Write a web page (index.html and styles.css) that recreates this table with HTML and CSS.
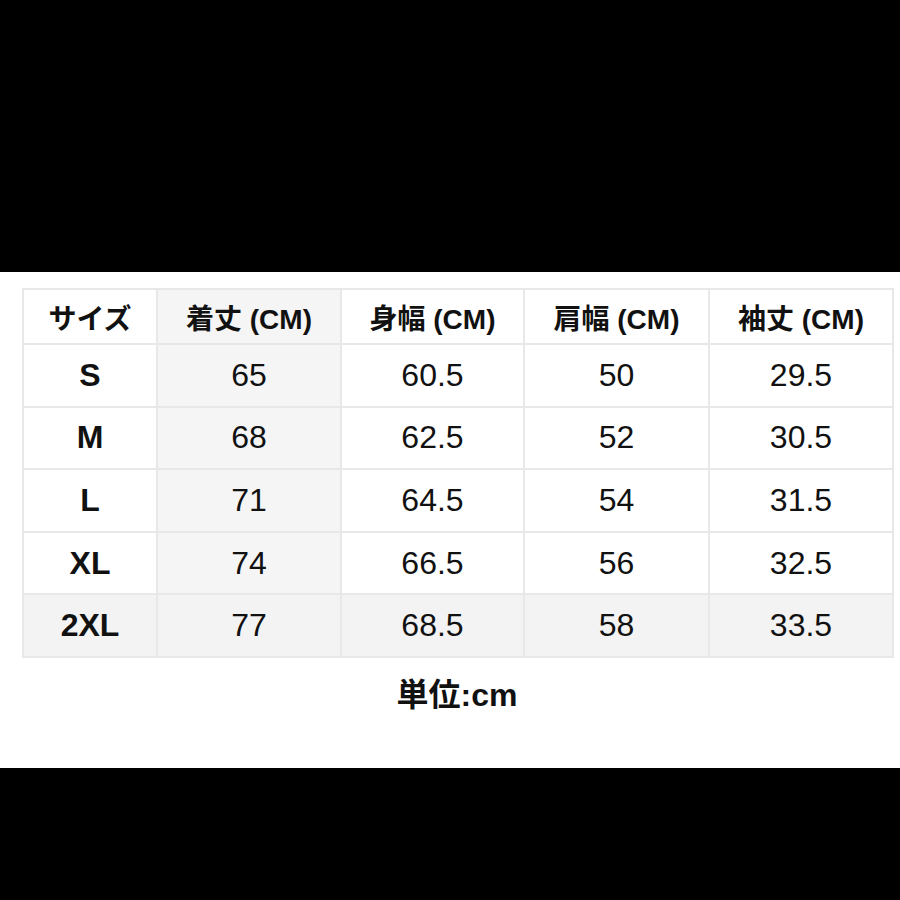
FILE: index.html
```html
<!DOCTYPE html>
<html lang="ja">
<head>
<meta charset="utf-8">
<title>サイズ表</title>
<link rel="stylesheet" href="styles.css">
</head>
<body>
<div class="band top"></div>
<main class="sheet">
  <table class="sizes">
    <colgroup>
      <col class="c1"><col class="c2"><col class="c3"><col class="c4"><col class="c5">
    </colgroup>
    <thead>
      <tr><th>サイズ</th><th class="alt">着丈 (CM)</th><th>身幅 (CM)</th><th>肩幅 (CM)</th><th>袖丈 (CM)</th></tr>
    </thead>
    <tbody>
      <tr><th>S</th><td class="alt">65</td><td>60.5</td><td>50</td><td>29.5</td></tr>
      <tr><th>M</th><td class="alt">68</td><td>62.5</td><td>52</td><td>30.5</td></tr>
      <tr><th>L</th><td class="alt">71</td><td>64.5</td><td>54</td><td>31.5</td></tr>
      <tr><th>XL</th><td class="alt">74</td><td>66.5</td><td>56</td><td>32.5</td></tr>
      <tr class="shade"><th>2XL</th><td class="alt">77</td><td>68.5</td><td>58</td><td>33.5</td></tr>
    </tbody>
  </table>
  <p class="unit">単位:cm</p>
</main>
<div class="band bottom"></div>
</body>
</html>
```

FILE: styles.css
```css
html, body {
  margin: 0;
  padding: 0;
  background: #000;
}
body {
  width: 900px;
  font-family: "Liberation Sans", Arial, "Noto Sans CJK JP", sans-serif;
  color: #111;
}
.band.top { height: 272px; background: #000; }
.band.bottom { height: 132px; background: #000; }
.sheet {
  height: 496px;
  background: #fff;
  box-sizing: border-box;
  padding: 16px 0 0 22px;
}
.sizes {
  width: 870px;
  border-collapse: collapse;
  table-layout: fixed;
}
.c1 { width: 134px; }
.c2 { width: 184px; }
.c3 { width: 183px; }
.c4 { width: 185px; }
.c5 { width: 184px; }
.sizes th, .sizes td {
  border: 2px solid #e8e8e8;
  text-align: center;
  padding: 0;
  color: #111;
}
.sizes thead th {
  height: 53px;
  font-size: 28px;
  font-weight: bold;
}
.sizes tbody tr { height: 62.6px; }
.sizes tbody th {
  font-size: 32px;
  font-weight: bold;
}
.sizes tbody td {
  font-size: 32px;
  font-weight: normal;
}
.alt { background: #f5f5f5; }
.shade th, .shade td { background: #f3f3f3; }
.unit {
  margin: 18px 0 0 0;
  width: 870px;
  text-align: center;
  font-size: 32px;
  font-weight: bold;
  color: #111;
  line-height: 38px;
}
```
